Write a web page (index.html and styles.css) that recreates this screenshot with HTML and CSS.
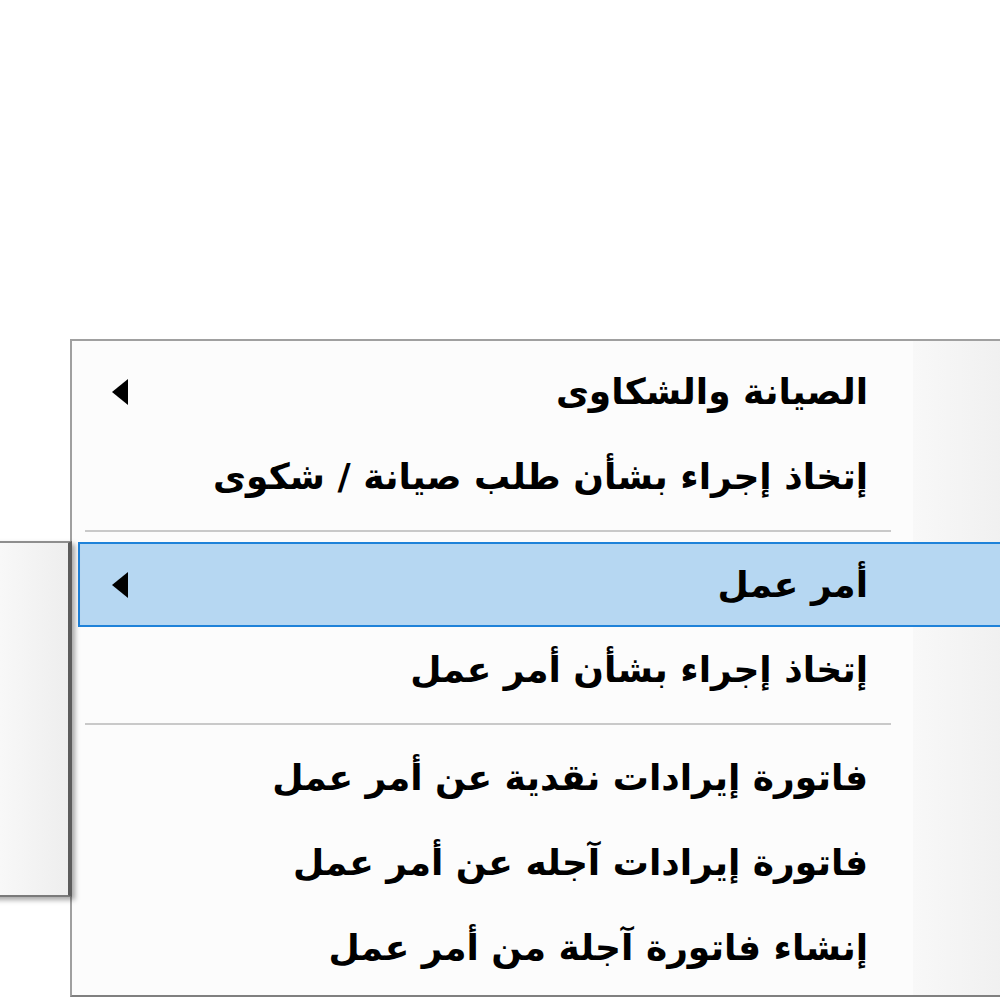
FILE: index.html
```html
<!DOCTYPE html>
<html lang="ar">
  <head>
    <meta charset="UTF-8" />
    <meta name="viewport" content="width=device-width, initial-scale=1.0" />
    <title>قائمة</title>
    <link rel="stylesheet" href="styles.css">
  </head>
  <body>
    <div class="parent-menu"></div>
    <ul class="menu" dir="rtl">
      <li class="item has-sub"><span>الصيانة والشكاوى</span><i class="arrow"></i></li>
      <li class="item"><span>إتخاذ إجراء بشأن طلب صيانة / شكوى</span></li>
      <li class="sep"></li>
      <li class="item has-sub active"><span>أمر عمل</span><i class="arrow"></i></li>
      <li class="item"><span>إتخاذ إجراء بشأن أمر عمل</span></li>
      <li class="sep"></li>
      <li class="item"><span>فاتورة إيرادات نقدية عن أمر عمل</span></li>
      <li class="item"><span>فاتورة إيرادات آجله عن أمر عمل</span></li>
      <li class="item"><span>إنشاء فاتورة آجلة من أمر عمل</span></li>
    </ul>
  </body>
</html>
```

FILE: styles.css
```css
html,
body {
  margin: 0;
  height: 100%;
  background: #fff;
  overflow: hidden;
}
body {
  position: relative;
  font-family: "DejaVu Sans", sans-serif;
}
.parent-menu {
  position: absolute;
  left: -20px;
  top: 541px;
  width: 88px;
  height: 352px;
  border-top: 2px solid #8e8e8e;
  border-bottom: 2px solid #7a7a7a;
  border-right: 4px solid #5c5c5c;
  background: linear-gradient(to right, #fbfbfb, #eeeeee);
  box-shadow: 3px 3px 5px rgba(0, 0, 0, 0.35);
  z-index: 2;
}
.menu {
  position: absolute;
  left: 70px;
  top: 339px;
  width: 940px;
  margin: 0;
  padding: 8px 0 5px 6px;
  list-style: none;
  border: 2px solid #a0a0a0;
  border-bottom-color: #808080;
  background: linear-gradient(to right, #fcfcfc 841px, #f8f8f8 841px, #efefef);
}
.item {
  display: flex;
  align-items: center;
  justify-content: space-between;
  height: 81px;
  padding: 0 148px 0 32px;
  border: 2px solid transparent;
  font-size: 36px;
  font-weight: bold;
  color: #000;
}
.item.active {
  background: #b6d7f2;
  border-color: #1f82d9;
}
.arrow {
  width: 0;
  height: 0;
  border-top: 13px solid transparent;
  border-bottom: 13px solid transparent;
  border-right: 16px solid #000;
}
.sep {
  height: 2px;
  margin: 11px 127px 10px 7px;
  background: #c9c9c9;
}
```
